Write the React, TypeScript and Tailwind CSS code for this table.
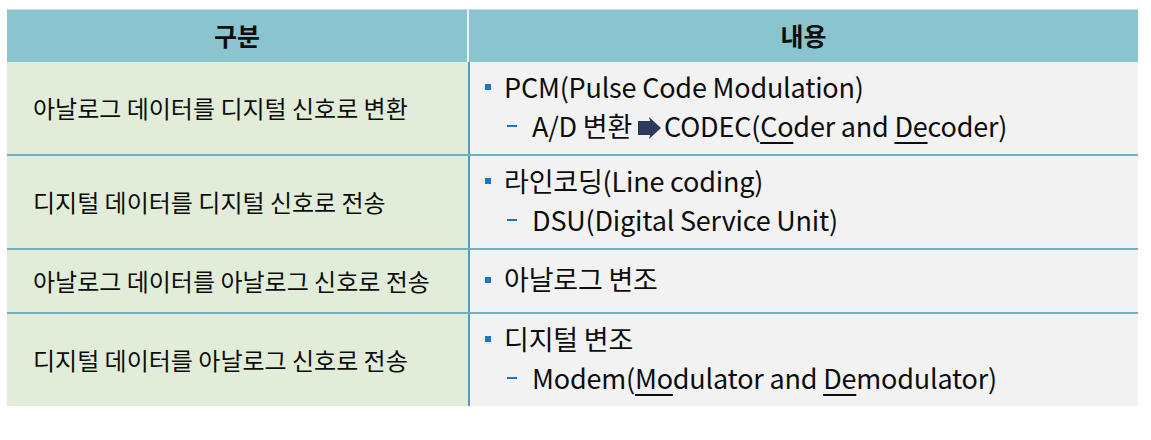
import React from 'react';

const font = { fontFamily: '"Noto Sans CJK KR", "Noto Sans", sans-serif' };

function Arrow() {
  return (
    <svg width="24" height="22" viewBox="0 0 24 22" className="inline-block ml-[6px] mr-[2px] -mt-[3px] align-middle">
      <polygon points="0,4 12,4 11,0 23,11 11,22 12,18 0,18" fill="#2e3b5e" />
    </svg>
  );
}

function Bullet({ children }: { children: React.ReactNode }) {
  return (
    <div className="flex items-center h-[39px]">
      <span className="w-[6px] h-[6px] bg-[#1f74c4] ml-[15px] mr-[13px]" />
      <span>{children}</span>
    </div>
  );
}

function Dash({ children }: { children: React.ReactNode }) {
  return (
    <div className="flex items-center h-[39px]">
      <span className="w-[10px] h-[2px] bg-[#1f74c4] ml-[37px] mr-[15px]" />
      <span>{children}</span>
    </div>
  );
}

interface Row {
  label: string;
  h: string;
  content: React.ReactNode;
}

const rows: Row[] = [
  {
    label: '아날로그 데이터를 디지털 신호로 변환',
    h: 'h-[94px]',
    content: (
      <>
        <Bullet>PCM(Pulse Code Modulation)</Bullet>
        <Dash>
          A/D 변환<Arrow />CODEC(<span className="underline underline-offset-[5px]">Co</span>der and{' '}
          <span className="underline underline-offset-[5px]">De</span>coder)
        </Dash>
      </>
    ),
  },
  {
    label: '디지털 데이터를 디지털 신호로 전송',
    h: 'h-[94px]',
    content: (
      <>
        <Bullet>라인코딩(Line coding)</Bullet>
        <Dash>DSU(Digital Service Unit)</Dash>
      </>
    ),
  },
  {
    label: '아날로그 데이터를 아날로그 신호로 전송',
    h: 'h-[64px]',
    content: <Bullet>아날로그 변조</Bullet>,
  },
  {
    label: '디지털 데이터를 아날로그 신호로 전송',
    h: 'h-[92px]',
    content: (
      <>
        <Bullet>디지털 변조</Bullet>
        <Dash>
          Modem(<span className="underline underline-offset-[5px]">Mo</span>dulator and{' '}
          <span className="underline underline-offset-[5px]">De</span>modulator)
        </Dash>
      </>
    ),
  },
];

export default function App() {
  return (
    <div className="w-[1151px] h-[440px] bg-white pl-[7px] pt-[9px]" style={font}>
      <div className="w-[1131px] text-[#0d0d0d]">
        {/* header */}
        <div className="flex h-[53px] bg-[#8ac4cf] border-t border-[#bfe0e6] text-[25px]">
          <div className="w-[460px] flex items-center justify-center font-bold">구분</div>
          <div className="w-[2px] bg-white/80" />
          <div className="flex-1 flex items-center justify-center font-bold">내용</div>
        </div>
        {rows.map((r, i) => (
          <div
            key={i}
            className={`flex ${r.h} ${i < rows.length - 1 ? 'border-b-2 border-[#6fb2be]' : ''}`}
          >
            <div className="w-[461px] bg-[#e1edd9] flex items-center pl-[26px] text-[24px]">
              {r.label}
            </div>
            <div className="w-[2px] bg-[#4a9fc6]" />
            <div className="flex-1 bg-[#f2f2f2] flex flex-col justify-center pb-[3px] text-[27px] tracking-[-0.2px]">
              {r.content}
            </div>
          </div>
        ))}
      </div>
    </div>
  );
}
